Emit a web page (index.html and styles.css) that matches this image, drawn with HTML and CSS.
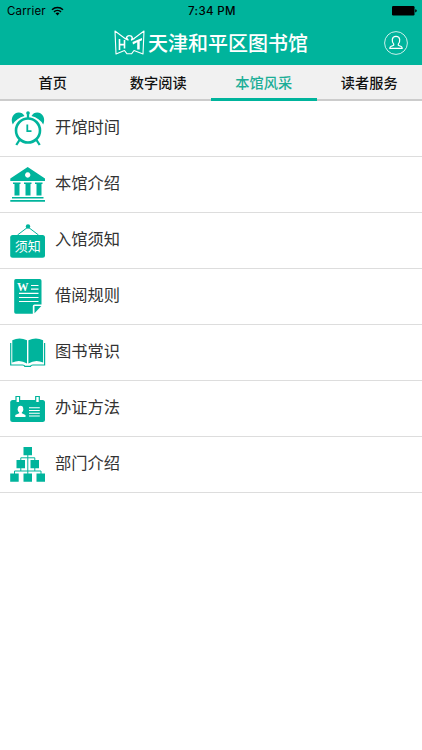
FILE: index.html
```html
<!DOCTYPE html>
<html lang="zh-CN">
<head>
    <meta charset="UTF-8">
    <meta name="viewport" content="width=device-width, initial-scale=1.0">
    <title>天津和平区图书馆</title>
    <link rel="stylesheet" href="styles.css">
</head>
<body>
    <header class="header">
        <div class="status-bar">
            <div class="carrier">
                <span>Carrier</span>
                <svg class="wifi" viewBox="0 0 13 10">
                    <path d="M1 3.7a8 8 0 0 1 11 0M3 5.9a5 5 0 0 1 7 0" fill="none" stroke="#000" stroke-width="1.5"/>
                    <path d="M4.5 7.3a3 3 0 0 1 4 0L6.5 9.5z"/>
                </svg>
            </div>
            <span class="time">7:34 PM</span>
            <div class="battery">
                <svg viewBox="0 0 25 10">
                    <rect width="22.5" height="9.5" rx="1.2"/>
                    <path d="M23.2 3.2q1.6.4 1.6 1.6t-1.6 1.6z"/>
                </svg>
            </div>
        </div>
        <div class="title-bar">
            <div class="brand">
                <svg class="logo" viewBox="0 0 31 25">
                    <path d="M11 8.5L1 1L2 24L10.5 20.5L13 23.8H17.5L20 20.5L29 24L30 1L20 8.5" fill="none" stroke="#fff" stroke-width="1.1" stroke-linejoin="round"/>
                    <path d="M10.8 8.3L14 10L12.5 7.8Q13 5.5 15.5 5.6Q18 5.6 18.3 8L17.5 10L20.5 8.3" fill="none" stroke="#fff" stroke-width="1.4" stroke-linejoin="round"/>
                    <path d="M5.5 9V20M10.5 10V18.5M5.5 14.6H10.5" fill="none" stroke="#fff" stroke-width="1.6"/>
                    <path d="M18.5 12L28 8V10.2L25.7 11.2V19.5H23.2V12.3L19 14.5z" fill="#fff"/>
                </svg>
                <h1>天津和平区图书馆</h1>
            </div>
            <a class="user" href="#">
                <svg viewBox="0 0 24 24" fill="none" stroke="#fff">
                    <circle cx="12" cy="12" r="11.4" stroke-width=".8"/>
                    <path d="M9.7 13.2Q8 11.4 8.3 8.3Q8.7 5.3 12 5.3T15.7 8.3Q16 11.4 14.3 13.2V14.3L17.2 15.5Q18.2 16 18.2 17.4H5.8Q5.8 16 6.8 15.5L9.7 14.3z" stroke-width="1.2" stroke-linejoin="round"/>
                </svg>
            </a>
        </div>
    </header>

    <nav class="tabs">
        <a href="#">首页</a>
        <a href="#">数字阅读</a>
        <a href="#" class="active">本馆风采</a>
        <a href="#">读者服务</a>
    </nav>

    <ul class="menu">
        <li>
            <svg class="icon" viewBox="0 0 36 36">
                <circle cx="18" cy="19.5" r="12" fill="none" stroke="#00b49c" stroke-width="2.6"/>
                <path d="M2.8 13.5C0 7.5 3.5 1.6 8.8 1.6Q12.5 1.6 14.5 5Q6.5 7 2.8 13.5zM33.2 13.5C36 7.5 32.5 1.6 27.2 1.6Q23.5 1.6 21.5 5Q29.5 7 33.2 13.5z"/>
                <circle cx="18" cy="2" r="1.8"/>
                <path d="M18 2V7M9.5 29L6.3 34M26.5 29L29.7 34" fill="none" stroke="#00b49c" stroke-width="2.3"/>
                <path d="M17.3 13.5V20.2H21.5" fill="none" stroke="#00b49c" stroke-width="1.8"/>
            </svg>
            <span>开馆时间</span>
        </li>
        <li>
            <svg class="icon" viewBox="0 0 36 36">
                <path fill-rule="evenodd" d="M17.7 0L35 11.5V14H.3V11.5zM17.7 5.3a2.7 2.7 0 1 0 .01 0z"/>
                <path d="M3 15.5H10.5V17H9.5V28.5H4.5V17H3zM14 15.5H21.5V17H20.5V28.5H15.5V17H14zM25 15.5H32.5V17H31.5V28.5H26.5V17H25z"/>
                <path d="M2 30H33.5V31.5H2zM.3 33H35V34.7H.3z"/>
            </svg>
            <span>本馆介绍</span>
        </li>
        <li>
            <svg class="icon" viewBox="0 0 36 36">
                <circle cx="18" cy="3.5" r="2.2"/>
                <path d="M7.5 12L18 4L28.5 12" fill="none" stroke="#00b49c"/>
                <rect x=".2" y="12" width="34.8" height="22.8" rx="2.5"/>
                <text class="sign" x="17.8" y="28">须知</text>
            </svg>
            <span>入馆须知</span>
        </li>
        <li>
            <svg class="icon" viewBox="0 0 36 36">
                <path d="M5.8 0H29.8Q31.5 0 31.5 1.8V25.5H24.5Q22.8 25.5 22.8 27V34.8H5.8Q4.2 34.8 4.2 33V1.8Q4.2 0 5.8 0z"/>
                <path d="M24.5 27H31.3L24.5 34.3z"/>
                <path d="M21 6.5H28.5M21 10.2H28.5M9 14.4H28.5M9 18.5H28.5M9 22.5H28.5" fill="none" stroke="#fff" stroke-width="1.2"/>
                <text class="word" x="12.7" y="11.5">W</text>
            </svg>
            <span>借阅规则</span>
        </li>
        <li>
            <svg class="icon" viewBox="0 0 36 36">
                <path d="M2.3 5.3Q9.5 1.5 17 5.3V28.5Q10 24 2.3 27.5zM18.4 5.3Q26 1.5 33.1 5.3V27.5Q25.5 24 18.4 28.5z"/>
                <path d="M.7 8V30H12.5Q14.5 30 14.8 31.3H20.5Q21 30 22.8 30H34.6V8" fill="none" stroke="#00b49c" stroke-width="1.2"/>
            </svg>
            <span>图书常识</span>
        </li>
        <li>
            <svg class="icon" viewBox="0 0 36 36">
                <rect x=".2" y="9" width="34.8" height="22" rx="2.5"/>
                <path d="M6 5.5H9.6V11.5H6zM25.7 5.5H29.3V11.5H25.7z" fill="#fff" stroke="#00b49c" stroke-width="1.2"/>
                <g fill="#fff">
                    <ellipse cx="10.5" cy="18.2" rx="2.8" ry="3.4"/>
                    <path d="M9.2 20H11.8V22.3L15.5 24V26H5.3V24L9.2 22.3z"/>
                </g>
                <path d="M19 16.8H29.8M19 19.5H29.8M19 22.2H29.8M19 25H29.8" fill="none" stroke="#fff" stroke-width="1.1"/>
            </svg>
            <span>办证方法</span>
        </li>
        <li>
            <svg class="icon" viewBox="0 0 36 36">
                <path d="M13.5 0H22V8.3H13.5zM6.5 13H15V21.3H6.5zM20.5 13H29V21.3H20.5zM.2 26.5H8.7V34.8H.2zM13.5 26.5H22V34.8H13.5zM26.5 26.5H35V34.8H26.5z"/>
                <path d="M17.8 8V27M10.8 13.5V10.8H24.8V13.5M4.5 27V24H31V27M10.8 21V24M24.8 21V24" fill="none" stroke="#00b49c"/>
            </svg>
            <span>部门介绍</span>
        </li>
    </ul>
</body>
</html>
```

FILE: styles.css
```css
* {
    box-sizing: border-box;
}
body {
    margin: 0;
    font-family: "Liberation Sans", "Noto Sans CJK SC", sans-serif;
    background-color: #fff;
    color: #333;
}
a {
    color: inherit;
    text-decoration: none;
}
svg {
    display: block;
}
.header {
    height: 65px;
    background-color: #00b49c;
}
.status-bar {
    display: grid;
    grid-template-columns: 1fr auto 1fr;
    align-items: center;
    height: 21px;
    padding: 0 5px 0 7px;
    font-family: Inter, sans-serif;
    font-size: 11.5px;
    color: #000;
}
.carrier {
    display: flex;
    align-items: center;
    gap: 5px;
    letter-spacing: 0.15px;
}
.wifi {
    width: 13px;
    height: 10px;
}
.time {
    font-weight: 500;
    letter-spacing: 0.35px;
}
.battery svg {
    width: 25px;
    height: 10px;
    margin-left: auto;
}
.title-bar {
    display: grid;
    grid-template-columns: 1fr auto 1fr;
    align-items: center;
    height: 43px;
    padding: 0 14px;
}
.brand {
    grid-column: 2;
    display: flex;
    align-items: center;
    gap: 3px;
}
.logo {
    width: 31px;
    height: 25px;
}
.brand h1 {
    margin: 0;
    padding-top: 3px;
    font-size: 20px;
    font-weight: 500;
    line-height: 30px;
    color: #fff;
}
.user {
    justify-self: end;
}
.user svg {
    width: 24px;
    height: 24px;
}
.tabs {
    display: grid;
    grid-template-columns: repeat(4, 1fr);
    height: 36px;
    background-color: #f1f1f1;
}
.tabs a {
    height: 36px;
    padding-top: 2px;
    border-bottom: 2px solid #ccc;
    font-size: 14.2px;
    font-weight: 500;
    line-height: 32px;
    text-align: center;
    color: #111;
}
.tabs a.active {
    border-bottom: 3px solid #00b49c;
    color: #1cae97;
}
.menu {
    margin: 0;
    padding: 0;
    list-style: none;
}
.menu li {
    display: flex;
    gap: 9px;
    height: 56px;
    padding: 10px;
    border-bottom: 1px solid #ddd;
    font-size: 16.3px;
    line-height: 32px;
}
.icon {
    width: 36px;
    height: 36px;
    fill: #00b49c;
}
.sign {
    font-size: 13px;
    fill: #fff;
    text-anchor: middle;
}
.word {
    font-family: "Liberation Serif", serif;
    font-size: 11.5px;
    font-weight: bold;
    fill: #fff;
    text-anchor: middle;
}
```
